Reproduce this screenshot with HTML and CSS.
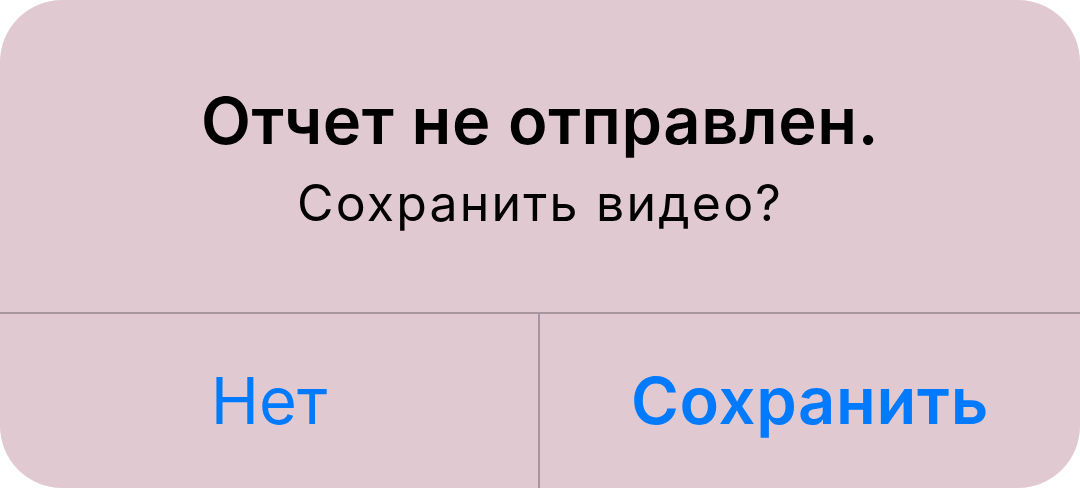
FILE: index.html
```html
<!DOCTYPE html>
<html>
<head>
    <meta name="viewport" content="width=device-width, initial-scale=1">
    <link rel="stylesheet" href="styles.css">
</head>
<body>

<div class="alert">
    <div class="alert-body">
        <h1 class="alert-title">Отчет не отправлен.</h1>
        <p class="alert-text">Сохранить видео?</p>
    </div>
    <div class="alert-actions">
        <button type="button" class="btn">Нет</button>
        <button type="button" class="btn primary">Сохранить</button>
    </div>
</div>

</body>
</html>
```

FILE: styles.css
```css
body {
    margin: 0;
    background: #fff;
    font-family: Inter, "Noto Sans", sans-serif;
}
* {box-sizing: border-box;}

.alert {
    width: 1080px;
    height: 488px;
    background-color: #e1c9d1;
    border-radius: 62px;
    overflow: hidden;
    display: flex;
    flex-direction: column;
}

/* Title and message */
.alert-body {
    height: 312px;
    padding-top: 82px;
    text-align: center;
}

.alert-title {
    margin: 0;
    font-size: 65px;
    line-height: 78px;
    font-weight: 600;
    letter-spacing: 0.6px;
    color: #000;
}

.alert-text {
    margin: 13px 0 0 0;
    font-size: 50px;
    line-height: 60px;
    letter-spacing: 2.2px;
    color: #000;
}

/* Two buttons side by side, separated by thin lines */
.alert-actions {
    flex: 1;
    display: grid;
    grid-template-columns: 538px 1fr;
    border-top: 2px solid #a8969e;
}

.btn {
    background: none;
    border: none;
    padding: 0;
    font-family: inherit;
    font-size: 65px;
    line-height: 78px;
    color: #007aff;
    cursor: pointer;
}

.btn.primary {
    border-left: 2px solid #a8969e;
    font-weight: 600;
    letter-spacing: 0.7px;
}
```
